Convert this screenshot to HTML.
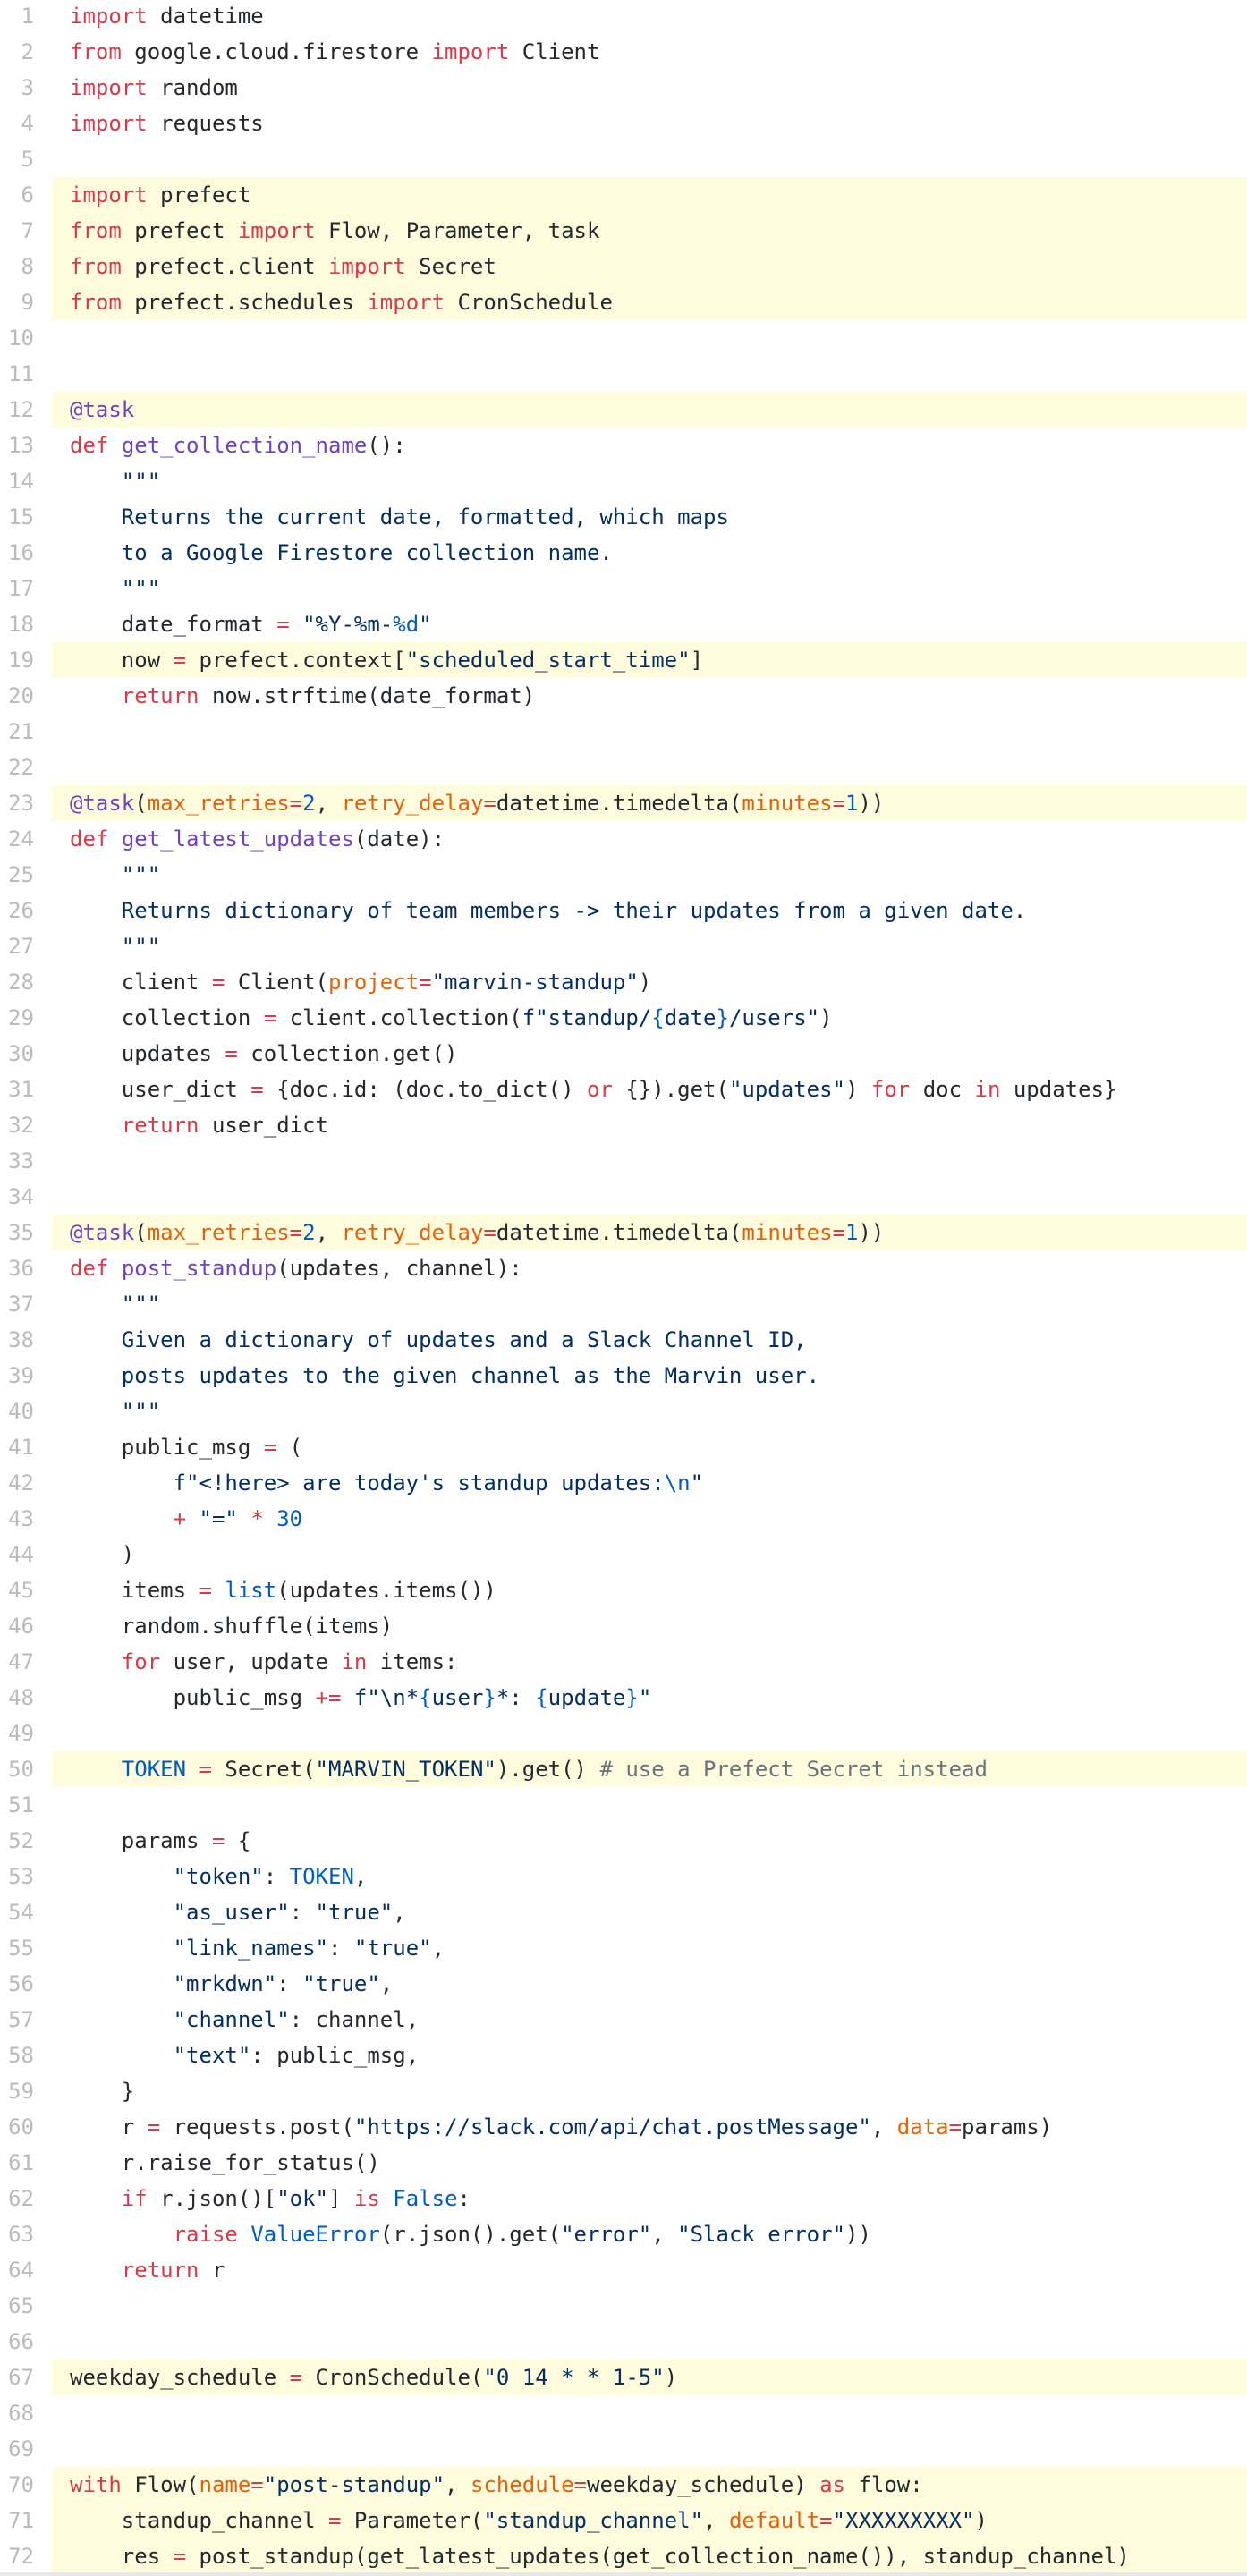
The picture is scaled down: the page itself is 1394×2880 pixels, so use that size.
<!DOCTYPE html>
<html><head><meta charset="utf-8"><style>
html,body{margin:0;padding:0;background:#fff;width:1394px;height:2880px;overflow:hidden}
.w{position:absolute;top:-2px;left:0;width:1394px}
.l{position:relative;height:40px;line-height:40px;font-family:"DejaVu Sans Mono","Liberation Mono",monospace;font-size:24px;color:#24292e;white-space:pre}
.n{position:absolute;left:0;width:38px;text-align:right;color:#babbbc}
.c{position:absolute;left:78px}
.h{background:#fffbdd;margin-left:58px}
.h .n{left:-58px}
.h .c{left:20px}
.k{color:#d73a49}.s{color:#032f62}.f{color:#6f42c1}.p{color:#e36209}.b{color:#005cc5}.m{color:#6a737d}
.bar{position:absolute;left:0;top:2876px;width:1394px;height:4px;background:#e8e8e8}
</style></head><body><div class="w">
<div class="l"><span class="n">1</span><span class="c"><span class="k">import</span> datetime</span></div>
<div class="l"><span class="n">2</span><span class="c"><span class="k">from</span> google.cloud.firestore <span class="k">import</span> Client</span></div>
<div class="l"><span class="n">3</span><span class="c"><span class="k">import</span> random</span></div>
<div class="l"><span class="n">4</span><span class="c"><span class="k">import</span> requests</span></div>
<div class="l"><span class="n">5</span><span class="c"></span></div>
<div class="l h"><span class="n">6</span><span class="c"><span class="k">import</span> prefect</span></div>
<div class="l h"><span class="n">7</span><span class="c"><span class="k">from</span> prefect <span class="k">import</span> Flow, Parameter, task</span></div>
<div class="l h"><span class="n">8</span><span class="c"><span class="k">from</span> prefect.client <span class="k">import</span> Secret</span></div>
<div class="l h"><span class="n">9</span><span class="c"><span class="k">from</span> prefect.schedules <span class="k">import</span> CronSchedule</span></div>
<div class="l"><span class="n">10</span><span class="c"></span></div>
<div class="l"><span class="n">11</span><span class="c"></span></div>
<div class="l h"><span class="n">12</span><span class="c"><span class="f">@task</span></span></div>
<div class="l"><span class="n">13</span><span class="c"><span class="k">def</span> <span class="f">get_collection_name</span>():</span></div>
<div class="l"><span class="n">14</span><span class="c"><span class="s">    """</span></span></div>
<div class="l"><span class="n">15</span><span class="c"><span class="s">    Returns the current date, formatted, which maps</span></span></div>
<div class="l"><span class="n">16</span><span class="c"><span class="s">    to a Google Firestore collection name.</span></span></div>
<div class="l"><span class="n">17</span><span class="c"><span class="s">    """</span></span></div>
<div class="l"><span class="n">18</span><span class="c">    date_format <span class="k">=</span> <span class="s">"%Y-%m-<span class="b">%d</span>"</span></span></div>
<div class="l h"><span class="n">19</span><span class="c">    now <span class="k">=</span> prefect.context[<span class="s">"scheduled_start_time"</span>]</span></div>
<div class="l"><span class="n">20</span><span class="c">    <span class="k">return</span> now.strftime(date_format)</span></div>
<div class="l"><span class="n">21</span><span class="c"></span></div>
<div class="l"><span class="n">22</span><span class="c"></span></div>
<div class="l h"><span class="n">23</span><span class="c"><span class="f">@task</span>(<span class="p">max_retries</span><span class="k">=</span><span class="b">2</span>, <span class="p">retry_delay</span><span class="k">=</span>datetime.timedelta(<span class="p">minutes</span><span class="k">=</span><span class="b">1</span>))</span></div>
<div class="l"><span class="n">24</span><span class="c"><span class="k">def</span> <span class="f">get_latest_updates</span>(date):</span></div>
<div class="l"><span class="n">25</span><span class="c"><span class="s">    """</span></span></div>
<div class="l"><span class="n">26</span><span class="c"><span class="s">    Returns dictionary of team members -&gt; their updates from a given date.</span></span></div>
<div class="l"><span class="n">27</span><span class="c"><span class="s">    """</span></span></div>
<div class="l"><span class="n">28</span><span class="c">    client <span class="k">=</span> Client(<span class="p">project</span><span class="k">=</span><span class="s">"marvin-standup"</span>)</span></div>
<div class="l"><span class="n">29</span><span class="c">    collection <span class="k">=</span> client.collection(<span class="s">f"standup/<span class="b">{</span>date<span class="b">}</span>/users"</span>)</span></div>
<div class="l"><span class="n">30</span><span class="c">    updates <span class="k">=</span> collection.get()</span></div>
<div class="l"><span class="n">31</span><span class="c">    user_dict <span class="k">=</span> {doc.id: (doc.to_dict() <span class="k">or</span> {}).get(<span class="s">"updates"</span>) <span class="k">for</span> doc <span class="k">in</span> updates}</span></div>
<div class="l"><span class="n">32</span><span class="c">    <span class="k">return</span> user_dict</span></div>
<div class="l"><span class="n">33</span><span class="c"></span></div>
<div class="l"><span class="n">34</span><span class="c"></span></div>
<div class="l h"><span class="n">35</span><span class="c"><span class="f">@task</span>(<span class="p">max_retries</span><span class="k">=</span><span class="b">2</span>, <span class="p">retry_delay</span><span class="k">=</span>datetime.timedelta(<span class="p">minutes</span><span class="k">=</span><span class="b">1</span>))</span></div>
<div class="l"><span class="n">36</span><span class="c"><span class="k">def</span> <span class="f">post_standup</span>(updates, channel):</span></div>
<div class="l"><span class="n">37</span><span class="c"><span class="s">    """</span></span></div>
<div class="l"><span class="n">38</span><span class="c"><span class="s">    Given a dictionary of updates and a Slack Channel ID,</span></span></div>
<div class="l"><span class="n">39</span><span class="c"><span class="s">    posts updates to the given channel as the Marvin user.</span></span></div>
<div class="l"><span class="n">40</span><span class="c"><span class="s">    """</span></span></div>
<div class="l"><span class="n">41</span><span class="c">    public_msg <span class="k">=</span> (</span></div>
<div class="l"><span class="n">42</span><span class="c">        <span class="s">f"&lt;!here&gt; are today's standup updates:<span class="b">\n</span>"</span></span></div>
<div class="l"><span class="n">43</span><span class="c">        <span class="k">+</span> <span class="s">"="</span> <span class="k">*</span> <span class="b">30</span></span></div>
<div class="l"><span class="n">44</span><span class="c">    )</span></div>
<div class="l"><span class="n">45</span><span class="c">    items <span class="k">=</span> <span class="b">list</span>(updates.items())</span></div>
<div class="l"><span class="n">46</span><span class="c">    random.shuffle(items)</span></div>
<div class="l"><span class="n">47</span><span class="c">    <span class="k">for</span> user, update <span class="k">in</span> items:</span></div>
<div class="l"><span class="n">48</span><span class="c">        public_msg <span class="k">+=</span> <span class="s">f"\n*<span class="b">{</span>user<span class="b">}</span>*: <span class="b">{</span>update<span class="b">}</span>"</span></span></div>
<div class="l"><span class="n">49</span><span class="c"></span></div>
<div class="l h"><span class="n">50</span><span class="c">    <span class="b">TOKEN</span> <span class="k">=</span> Secret(<span class="s">"MARVIN_TOKEN"</span>).get() <span class="m"># use a Prefect Secret instead</span></span></div>
<div class="l"><span class="n">51</span><span class="c"></span></div>
<div class="l"><span class="n">52</span><span class="c">    params <span class="k">=</span> {</span></div>
<div class="l"><span class="n">53</span><span class="c">        <span class="s">"token"</span>: <span class="b">TOKEN</span>,</span></div>
<div class="l"><span class="n">54</span><span class="c">        <span class="s">"as_user"</span>: <span class="s">"true"</span>,</span></div>
<div class="l"><span class="n">55</span><span class="c">        <span class="s">"link_names"</span>: <span class="s">"true"</span>,</span></div>
<div class="l"><span class="n">56</span><span class="c">        <span class="s">"mrkdwn"</span>: <span class="s">"true"</span>,</span></div>
<div class="l"><span class="n">57</span><span class="c">        <span class="s">"channel"</span>: channel,</span></div>
<div class="l"><span class="n">58</span><span class="c">        <span class="s">"text"</span>: public_msg,</span></div>
<div class="l"><span class="n">59</span><span class="c">    }</span></div>
<div class="l"><span class="n">60</span><span class="c">    r <span class="k">=</span> requests.post(<span class="s">"https://slack.com/api/chat.postMessage"</span>, <span class="p">data</span><span class="k">=</span>params)</span></div>
<div class="l"><span class="n">61</span><span class="c">    r.raise_for_status()</span></div>
<div class="l"><span class="n">62</span><span class="c">    <span class="k">if</span> r.json()[<span class="s">"ok"</span>] <span class="k">is</span> <span class="b">False</span>:</span></div>
<div class="l"><span class="n">63</span><span class="c">        <span class="k">raise</span> <span class="b">ValueError</span>(r.json().get(<span class="s">"error"</span>, <span class="s">"Slack error"</span>))</span></div>
<div class="l"><span class="n">64</span><span class="c">    <span class="k">return</span> r</span></div>
<div class="l"><span class="n">65</span><span class="c"></span></div>
<div class="l"><span class="n">66</span><span class="c"></span></div>
<div class="l h"><span class="n">67</span><span class="c">weekday_schedule <span class="k">=</span> CronSchedule(<span class="s">"0 14 * * 1-5"</span>)</span></div>
<div class="l"><span class="n">68</span><span class="c"></span></div>
<div class="l"><span class="n">69</span><span class="c"></span></div>
<div class="l h"><span class="n">70</span><span class="c"><span class="k">with</span> Flow(<span class="p">name</span><span class="k">=</span><span class="s">"post-standup"</span>, <span class="p">schedule</span><span class="k">=</span>weekday_schedule) <span class="k">as</span> flow:</span></div>
<div class="l h"><span class="n">71</span><span class="c">    standup_channel <span class="k">=</span> Parameter(<span class="s">"standup_channel"</span>, <span class="p">default</span><span class="k">=</span><span class="s">"XXXXXXXXX"</span>)</span></div>
<div class="l h"><span class="n">72</span><span class="c">    res <span class="k">=</span> post_standup(get_latest_updates(get_collection_name()), standup_channel)</span></div>
</div><div class="bar"></div></body></html>
